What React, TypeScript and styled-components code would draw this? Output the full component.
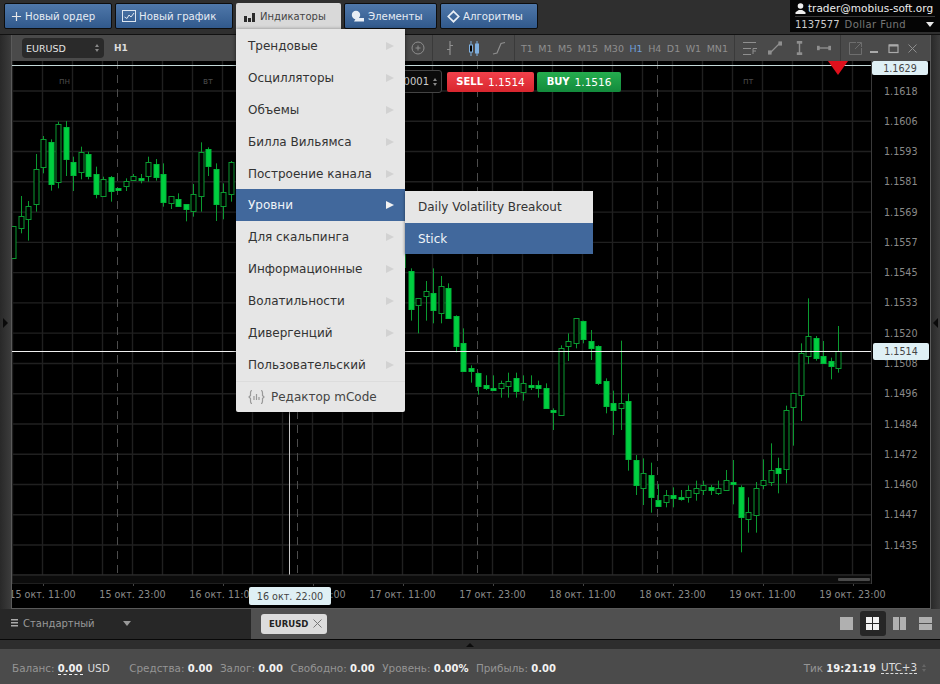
import React from 'react'
import styled, { createGlobalStyle } from 'styled-components'

const GlobalStyle = createGlobalStyle`
  html, body { margin: 0; padding: 0; background: #2f2f2f; }
  body { font-family: "DejaVu Sans", "Liberation Sans", sans-serif; font-size: 11px; }
  * { box-sizing: border-box; }
  svg { flex: none; }
`

const Page = styled.div`
  width: 940px;
  height: 684px;
  display: flex;
  flex-direction: column;
  overflow: hidden;
  background: #2f2f2f;
`

/* top bar */
const TopBar = styled.div`
  height: 35px;
  flex: none;
  display: flex;
  justify-content: space-between;
  background: #2f2f2f;
  border-bottom: 1px solid #111;
`
const Nav = styled.div`
  display: flex;
  gap: 3px;
  padding: 3px 0 0 4px;
`
const NavButton = styled.div<{ $w: number }>`
  position: relative;
  width: ${p => p.$w}px;
  height: 26px;
  display: flex;
  align-items: center;
  gap: 3px;
  padding-left: 6px;
  color: #e6ecf4;
  font-size: 10.2px;
  background: linear-gradient(#4f78aa, #31598c);
  border: 1px solid #0d0d0d;
  border-radius: 2px;
`
const NavOpen = styled(NavButton)`
  height: 26px;
  gap: 5px;
  padding-left: 8px;
  color: #444;
  font-size: 10px;
  background: #d9d9d9;
  border: 0;
  border-radius: 2px 2px 0 0;
  z-index: 5;
`
const Account = styled.div`
  width: 150px;
  height: 32px;
  background: #050505;
  padding: 0 5px;
  font-size: 10.5px;
`
const AccountRow = styled.div`
  height: 16px;
  display: flex;
  align-items: center;
  gap: 2px;
  color: #eee;
  white-space: nowrap;
`
const AccountRowBottom = styled(AccountRow)`
  border-top: 1px solid #3a3a3a;
  gap: 5px;
  color: #ccc;
  font-size: 10px;
`
const FundName = styled.span`
  color: #777;
  flex: 1;
  letter-spacing: 0.4px;
`
const DownMark = styled.span`
  width: 0;
  height: 0;
  border-left: 4px solid transparent;
  border-right: 4px solid transparent;
  border-top: 5px solid #e8e8e8;
  margin-right: 1px;
`

/* indicator menu */
const Menu = styled.div`
  position: absolute;
  top: 26px;
  left: 0;
  width: 169px;
  height: 383px;
  padding-top: 1px;
  background: #e6e6e6;
  box-shadow: 0 1px 4px rgba(0, 0, 0, 0.6);
  border-radius: 0 0 2px 2px;
`
const MenuItem = styled.div<{ $active?: boolean }>`
  position: relative;
  height: 31.9px;
  display: flex;
  align-items: center;
  justify-content: space-between;
  padding: 0 11px 0 12px;
  font-size: 12px;
  color: ${p => (p.$active ? '#f0f4f8' : '#333')};
  background: ${p => (p.$active ? '#41689c' : 'transparent')};
`
const MenuArrow = styled.span<{ $active?: boolean }>`
  width: 0;
  height: 0;
  border-top: 4px solid transparent;
  border-bottom: 4px solid transparent;
  border-left: 8px solid ${p => (p.$active ? '#f2f2f2' : '#d2d2d2')};
`
const MenuEditor = styled.div`
  height: 31px;
  display: flex;
  align-items: center;
  gap: 6px;
  padding-left: 12px;
  font-size: 12px;
  color: #444;
  border-top: 1px solid #dcdcdc;
`
const SubMenu = styled.div`
  position: absolute;
  left: 100%;
  top: 2px;
  width: 188px;
  background: #e6e6e6;
  box-shadow: 0 1px 3px rgba(0, 0, 0, 0.5);
`
const SubItem = styled.div<{ $active?: boolean }>`
  height: 31.5px;
  display: flex;
  align-items: center;
  padding-left: 13px;
  font-size: 12px;
  color: ${p => (p.$active ? '#f0f4f8' : '#333')};
  background: ${p => (p.$active ? '#41689c' : 'transparent')};
`

/* workspace */
const Workspace = styled.div`
  height: 574px;
  flex: none;
  display: flex;
`
const SideStrip = styled.div<{ $w: number }>`
  width: ${p => p.$w}px;
  flex: none;
  display: flex;
  align-items: center;
  justify-content: center;
  padding-top: 2px;
  background: linear-gradient(90deg, #292929, #3c3c3c);
`
const StripArrow = styled.span<{ $left?: boolean }>`
  width: 0;
  height: 0;
  border-top: 5px solid transparent;
  border-bottom: 5px solid transparent;
  ${p => (p.$left ? 'border-right: 5px solid #0a0a0a;' : 'border-left: 5px solid #0a0a0a;')}
`
const ChartWindow = styled.div`
  position: relative;
  flex: 1;
  display: flex;
  flex-direction: column;
  min-width: 0;
  background: #000;
  border-left: 1px solid #5a5a5a;
  border-right: 1px solid #5a5a5a;
  border-bottom: 1px solid #5a5a5a;
`
const Toolbar = styled.div`
  height: 26px;
  flex: none;
  display: flex;
  align-items: center;
  justify-content: space-between;
  background: #4a4a4a;
  color: #8c8c8c;
  font-size: 10px;
`
const ToolLeft = styled.div`
  display: flex;
  align-items: center;
  padding-left: 10px;
  gap: 10px;
`
const SymbolBox = styled.div`
  width: 82px;
  height: 20px;
  display: flex;
  align-items: center;
  justify-content: space-between;
  padding: 0 5px 0 4px;
  color: #e4e4e4;
  font-size: 9.5px;
  background: #2a2a2a;
  border-radius: 4px;
`
const Period = styled.span`
  color: #ddd;
  font-weight: bold;
  font-size: 9px;
`
const Stepper = styled.span`
  display: flex;
  flex-direction: column;
  gap: 2px;
  &::before, &::after {
    content: '';
    width: 0;
    height: 0;
    border-left: 2.5px solid transparent;
    border-right: 2.5px solid transparent;
  }
  &::before { border-bottom: 3px solid #888; }
  &::after { border-top: 3px solid #888; }
`
const FaintStepper = styled(Stepper)`
  &::before { border-bottom-color: #666; }
  &::after { border-top-color: #666; }
`
const ToolRight = styled.div`
  display: flex;
  height: 100%;
`
const ToolSection = styled.div<{ $pad: string }>`
  display: flex;
  align-items: center;
  padding: ${p => p.$pad};
  border-right: 1px solid #3a3a3a;
  &:last-child { border-right: 0; }
`
const IconCell = styled.div<{ $w: number }>`
  width: ${p => p.$w}px;
  display: flex;
  align-items: center;
  justify-content: center;
`
const ToolDot = styled.span`
  width: 2px;
  height: 3px;
  margin-right: 3px;
  background: #777;
`
const Frames = styled.div`
  display: flex;
  gap: 5.5px;
  font-size: 9.5px;
`
const Frame = styled.span<{ $active?: boolean }>`
  color: ${p => (p.$active ? '#6f9fd8' : '#8f8f8f')};
`

const ChartRow = styled.div`
  flex: none;
  height: 523px;
  display: flex;
`
const Plot = styled.div`
  width: 860px;
  flex: none;
`
const PlotSvg = styled.svg`
  display: block;
`
const PriceAxis = styled.div`
  flex: 1;
  padding: 15px 0 0 12px;
  color: #8a8a8a;
  font-size: 9.6px;
`
const PriceRow = styled.div`
  height: 30.27px;
  display: flex;
  align-items: center;
`
const TimeAxis = styled.div`
  flex: 1;
  overflow: hidden;
  display: flex;
  align-items: flex-start;
  color: #8a8a8a;
  font-size: 9.6px;
`
const TimeCell = styled.div<{ $first?: boolean }>`
  position: relative;
  width: 90px;
  flex: none;
  padding-top: 5px;
  text-align: center;
  white-space: nowrap;
  ${p => (p.$first ? 'margin-left: -14.5px;' : '')}
  &::before {
    content: '';
    position: absolute;
    top: 0;
    left: 50%;
    width: 1px;
    height: 2px;
    background: #444;
  }
`
const Tag = styled.div`
  position: absolute;
  display: flex;
  align-items: center;
  justify-content: center;
  color: #444;
  font-size: 9.6px;
  background: #dff0f5;
  border-radius: 2px;
`
const TagTop = styled(Tag)`
  left: 860px;
  top: 26px;
  width: 56px;
  height: 14px;
`
const TagCurrent = styled(Tag)`
  left: 861px;
  top: 308px;
  width: 56px;
  height: 17px;
`
const TagTime = styled(Tag)`
  left: 237px;
  top: 552px;
  width: 82px;
  height: 18px;
`
const TradePanel = styled.div`
  position: absolute;
  left: 380px;
  top: 35px;
  display: flex;
  align-items: center;
  gap: 3px;
`
const LotBox = styled.div`
  width: 50px;
  height: 23px;
  display: flex;
  align-items: center;
  justify-content: flex-end;
  gap: 4px;
  padding-right: 4px;
  margin-right: 2px;
  color: #ccc;
  font-size: 10px;
  background: #0b0b0b;
  border: 1px solid #444;
  border-radius: 3px;
`
const TradeButton = styled.div<{ $buy?: boolean }>`
  height: 20px;
  width: ${p => (p.$buy ? 84 : 87)}px;
  display: flex;
  align-items: center;
  justify-content: center;
  gap: 5px;
  color: #fff;
  font-size: 10.5px;
  border-radius: 2px;
  background: ${p => (p.$buy ? 'linear-gradient(#25ad4e, #138a3c)' : 'linear-gradient(#f2414b, #d8262e)')};
  b { font-size: 10px; }
`

/* bottom */
const TabsBar = styled.div`
  height: 31px;
  flex: none;
  display: flex;
  border-bottom: 1px solid #080808;
`
const LayoutPicker = styled.div`
  width: 251px;
  display: flex;
  align-items: center;
  padding: 0 0 2px 11px;
  color: #999;
  font-size: 10px;
  background: #272727;
`
const LayoutName = styled.span`
  margin: 0 0 0 4px;
  width: 100px;
`
const PickerMark = styled.span`
  width: 0;
  height: 0;
  border-left: 4px solid transparent;
  border-right: 4px solid transparent;
  border-top: 5px solid #999;
`
const TabsArea = styled.div`
  flex: 1;
  display: flex;
  align-items: center;
  justify-content: space-between;
  padding: 0 1.5px 1px 10px;
  background: #505050;
`
const Tab = styled.div`
  width: 66px;
  height: 20px;
  display: flex;
  align-items: center;
  gap: 5px;
  padding-left: 8px;
  color: #222;
  font-size: 8.5px;
  font-weight: bold;
  background: #dcdcdc;
  border-radius: 3px;
`
const Views = styled.div`
  display: flex;
  align-items: center;
`
const ViewButton = styled.div<{ $active?: boolean }>`
  width: 26.3px;
  height: 25px;
  display: flex;
  align-items: center;
  justify-content: center;
  border-radius: 3px;
  background: ${p => (p.$active ? '#262626' : 'transparent')};
`
const Splitter = styled.div`
  height: 9px;
  flex: none;
  display: flex;
  justify-content: center;
  align-items: flex-end;
  padding-bottom: 2px;
  background: #2d2d2d;
`
const SplitMark = styled.span`
  width: 0;
  height: 0;
  border-left: 4px solid transparent;
  border-right: 4px solid transparent;
  border-bottom: 4px solid #0c0c0c;
`
const StatusBar = styled.div`
  flex: 1;
  display: flex;
  align-items: center;
  justify-content: space-between;
  padding: 2px 14px 0 12px;
  background: #4b4b4b;
  color: #959595;
  font-size: 10.4px;
`
const StatusGroup = styled.div`
  display: flex;
  align-items: center;
  gap: 7.5px;
`
const StatusRight = styled(StatusGroup)`
  gap: 5px;
`
const Stat = styled.span<{ $gap?: number }>`
  white-space: nowrap;
  margin-right: ${p => p.$gap || 0}px;
  b { color: #f2f2f2; font-size: 10px; }
`
const Dashed = styled.b`
  border-bottom: 1px dashed #f2f2f2;
`
const Unit = styled.span`
  color: #ddd;
  margin-left: 5px;
`
const Zone = styled.span`
  color: #ddd;
  border-bottom: 1px dashed #ddd;
`

/* candles, y and x read off the picture at 3x */
type Row = [number, number, number, number, number]
const segments: { start: number; oy: number; rows: Row[] }[] = [
  {
    start: 13,
    oy: 60,
    rows: [
      [498, 594, 498, 594, 0], [408, 520, 468, 505, 0], [423, 542, 438, 477, 0], [282, 455, 328, 432, 0],
      [228, 340, 237, 320, 0], [238, 392, 245, 372, 1], [185, 385, 192, 365, 0], [183, 348, 200, 297, 1],
      [290, 393, 305, 343, 1], [260, 358, 275, 335, 0], [275, 358, 282, 348, 1], [320, 415, 343, 402, 1],
      [350, 410, 357, 408, 0], [348, 425, 350, 393, 1], [385, 392, 385, 391, 1], [355, 393, 364, 380, 0],
      [342, 362, 347, 358, 0], [342, 370, 355, 360, 1], [290, 365, 305, 348, 0], [297, 362, 312, 350, 1],
      [310, 440, 342, 425, 1], [408, 447, 409, 430, 0], [400, 440, 417, 438, 1], [432, 484, 432, 447, 1],
      [372, 470, 401, 453, 0], [247, 455, 275, 407, 0], [262, 348, 267, 318, 1], [310, 483, 327, 432, 1],
      [370, 478, 395, 437, 0], [303, 425, 305, 400, 0],
    ],
  },
  {
    start: 410.5,
    oy: 250,
    rows: [
      [55, 212, 62, 175, 1], [145, 250, 145, 166, 0], [93, 212, 123, 138, 0], [55, 220, 130, 182, 1],
      [78, 220, 108, 190, 0], [100, 205, 115, 205, 1], [196, 307, 197, 286, 1], [235, 363, 280, 363, 1],
      [346, 398, 353, 362, 1], [368, 434, 369, 407, 1], [376, 420, 405, 415, 1], [376, 422, 414, 421, 1],
      [392, 443, 400, 415, 0], [368, 443, 392, 407, 0], [368, 443, 384, 423, 1], [376, 452, 400, 428, 0],
      [376, 420, 405, 412, 1], [392, 443, 406, 414, 1], [400, 475, 414, 475, 1], [475, 540, 481, 488, 1],
      [286, 496, 295, 496, 0], [250, 333, 272, 288, 0], [205, 295, 205, 279, 0], [212, 280, 212, 265, 1],
      [240, 330, 272, 294, 1], [286, 405, 287, 398, 1],
    ],
  },
  {
    start: 605.5,
    oy: 290,
    rows: [
      [265, 370, 272, 346, 1], [302, 435, 338, 360, 1], [152, 420, 338, 354, 0], [310, 542, 332, 505, 1],
      [495, 615, 510, 585, 1], [505, 645, 548, 592, 0], [518, 668, 555, 622, 1], [582, 650, 630, 647, 1],
      [600, 652, 615, 636, 0], [592, 652, 614, 622, 1], [600, 632, 622, 629, 1], [586, 638, 600, 621, 0],
      [572, 632, 594, 608, 0], [572, 615, 586, 601, 0], [585, 615, 592, 600, 1], [572, 615, 593, 608, 0],
      [540, 602, 571, 600, 0], [510, 643, 577, 584, 1], [586, 787, 592, 682, 1], [622, 728, 667, 688, 0],
      [576, 728, 593, 675, 0], [508, 598, 571, 585, 0], [460, 588, 541, 578, 0], [503, 610, 533, 548, 1],
      [347, 580, 361, 539, 0], [308, 467, 309, 352, 0], [160, 393, 190, 316, 0], [25, 222, 138, 198, 0],
      [138, 212, 145, 205, 1], [153, 220, 197, 218, 1], [203, 268, 212, 227, 1], [108, 248, 182, 234, 0],
    ],
  },
]

const PlotChart = () => {
  const vertical = Array.from({ length: 29 }, (_, i) => 12.5 + 30 * i)
  const horizontal = Array.from({ length: 17 }, (_, i) => 91 + 30.27 * i)
  return (
    <PlotSvg width={860} height={523} viewBox="12 61 860 523">
      {vertical.map(x => (
        <line key={x} x1={x} x2={x} y1={61} y2={575} stroke="#202020" strokeWidth={1.4} />
      ))}
      {horizontal.map(y => (
        <line key={y} x1={12} x2={875} y1={y} y2={y} stroke="#202020" strokeWidth={1.4} />
      ))}
      {[117.5, 297.5, 477.5, 657.5].map(x => (
        <line key={x} x1={x} x2={x} y1={61} y2={575} stroke="#4c4c4c" strokeDasharray="8 6" />
      ))}
      <text x={59} y={84} fill="#4a4a4a" fontSize={8.5} fontFamily="DejaVu Sans">пн</text>
      <text x={203} y={84} fill="#4a4a4a" fontSize={8.5} fontFamily="DejaVu Sans">вт</text>
      <text x={743} y={84} fill="#4a4a4a" fontSize={8.5} fontFamily="DejaVu Sans">пт</text>
      <line x1={405.5} x2={405.5} y1={250} y2={268} stroke="#0a9a30" />
      {segments.map(seg =>
        seg.rows.map(([wt, wb, bt, bb, filled], i) => {
          const x = Math.round(seg.start + i * 7.5) + 0.5
          const y = (v: number) => seg.oy + v / 3
          const top = Math.round(y(bt)) + 0.5
          const h = Math.max(1, Math.round(y(bb) - y(bt)))
          return (
            <g key={`${seg.start}-${i}`}>
              <line x1={x} x2={x} y1={y(wt)} y2={y(wb)} stroke="#0a9a30" />
              <rect
                x={x - 2.5}
                y={top}
                width={5}
                height={h}
                fill={filled ? '#00cf40' : '#000'}
                stroke={filled ? '#00b838' : '#0a9a30'}
              />
            </g>
          )
        }),
      )}
      <line x1={12} x2={872} y1={65.5} y2={65.5} stroke="#c4d8d8" />
      <line x1={12} x2={872} y1={351.5} y2={351.5} stroke="#f0f0f0" />
      <line x1={289.5} x2={289.5} y1={61} y2={584} stroke="#c8c8c8" />
      <polygon points="828,61 848,61 838,75" fill="#e0101c" />
      <rect x={12} y={575} width={860} height={9} fill="#0c0c0c" stroke="#333" />
      <rect x={838} y={578} width={32} height={3} rx={1} fill="#4a4a4a" />
      <line x1={871.5} x2={871.5} y1={61} y2={584} stroke="#3a3a3a" />
    </PlotSvg>
  )
}

const PlusIcon = () => (
  <svg width={11} height={11} viewBox="0 0 12 12" fill="none" stroke="#e8e8e8" strokeWidth={1.3}>
    <path d="M6 1v10M1 6h10" />
  </svg>
)
const ChartIcon = () => (
  <svg width={14} height={14} viewBox="0 0 14 14" fill="none" stroke="#dde6f0">
    <rect x={0.5} y={1.5} width={13} height={11} />
    <path d="M2.5 8 5 9.5 7 6l2 2 3-4" />
  </svg>
)
const BarsIcon = () => (
  <svg width={11} height={11} viewBox="0 0 11 11" fill="#2b2b2b">
    <rect x={0} y={5} width={3} height={6} />
    <rect x={4} y={7} width={3} height={4} />
    <rect x={8} y={2} width={3} height={9} />
  </svg>
)
const ShapesIcon = () => (
  <svg width={14} height={12} viewBox="0 0 14 12" fill="#e8eef5">
    <circle cx={5} cy={5} r={4.2} />
    <path d="M5 8h8v3.5H3z" />
  </svg>
)
const DiamondIcon = () => (
  <svg width={13} height={13} viewBox="0 0 13 13" fill="none" stroke="#e8eef5" strokeWidth={1.7}>
    <path d="M6.5 1.3 11.7 6.5 6.5 11.7 1.3 6.5z" />
  </svg>
)
const UserIcon = () => (
  <svg width={11} height={11} viewBox="0 0 11 11" fill="#eee">
    <circle cx={5.5} cy={3} r={2.8} />
    <path d="M0.5 11V9.2L3.8 7h3.4l3.3 2.2V11z" />
  </svg>
)
const BraceIcon = () => (
  <svg width={17} height={16} viewBox="0 0 17 16" fill="none" stroke="#999" strokeWidth={1.2}>
    <path d="M4 1.5C2.5 1.5 2.5 2.5 2.5 4v2.5L1 8l1.5 1.5V12c0 1.5 0 2.5 1.500 2.500" />
    <path d="M13 1.500c1.500 0 1.500 1 1.500 2.500v2.500L16 8l-1.500 1.500V12c0 1.500 0 2.500-1.500 2.500" />
    <path d="M6 7v4M8.500 5v6M11 8v3" />
  </svg>
)
const tool = '#8f8f8f'
const CirclePlus = () => (
  <svg width={14} height={14} viewBox="0 0 14 14" fill="none" stroke={tool}>
    <circle cx={7} cy={7} r={6} />
    <path d="M4.500 7h5M7 4.500v5" />
  </svg>
)
const BarTool = () => (
  <svg width={10} height={14} viewBox="0 0 10 14" fill="none" stroke={tool} strokeWidth={1.200}>
    <path d="M5 0v14M2 8.500h3M5 4.500h3" />
  </svg>
)
const CandleTool = () => (
  <svg width={12} height={15} viewBox="0 0 12 15" fill="none" stroke="#7fb0e0">
    <path d="M3 0v15M9 0v15" />
    <rect x={1.500} y={4} width={3} height={7} fill="#000" />
    <rect x={7.500} y={3} width={3} height={9} fill="#7fb0e0" />
  </svg>
)
const LineTool = () => (
  <svg width={14} height={14} viewBox="0 0 14 14" fill="none" stroke={tool} strokeWidth={1.200}>
    <path d="M1 13 5 12 9 2.500 13 1.500" />
  </svg>
)
const FiboTool = () => (
  <svg width={14} height={13} viewBox="0 0 14 13" fill="none" stroke={tool}>
    <path d="M0 .5h13M0 6.500h8M0 12.500h8M10 12V6.500h4M10 9h3" />
  </svg>
)
const TrendTool = () => (
  <svg width={14} height={14} viewBox="0 0 14 14" fill={tool} stroke={tool} strokeWidth={1.200}>
    <path d="M2 12 12 2" />
    <rect x={0} y={10} width={3} height={3} />
    <rect x={11} y={1} width={3} height={3} />
  </svg>
)
const VLineTool = () => (
  <svg width={7} height={14} viewBox="0 0 7 14" fill={tool} stroke={tool} strokeWidth={1.400}>
    <path d="M3.500 1v12" />
    <rect x={1.500} y={0.500} width={4} height={1.500} />
    <rect x={1.500} y={12} width={4} height={1.500} />
  </svg>
)
const HLineTool = () => (
  <svg width={14} height={6} viewBox="0 0 14 6" fill={tool} stroke={tool} strokeWidth={1.400}>
    <path d="M1 3h12" />
    <rect x={0.500} y={1.500} width={1.500} height={3} />
    <rect x={12} y={1.500} width={1.500} height={3} />
  </svg>
)
const PopTool = () => (
  <svg width={13} height={13} viewBox="0 0 13 13" fill="none" stroke="#6e6e6e">
    <path d="M7 .5H.5v12h12V6M6 7l6-6M8 .5h4.500V5" />
  </svg>
)
const MinTool = () => (
  <svg width={11} height={11} viewBox="0 0 11 11" fill="#aaa">
    <rect x={1} y={8} width={8} height={2} />
  </svg>
)
const MaxTool = () => (
  <svg width={11} height={11} viewBox="0 0 11 11" fill="none" stroke="#aaa">
    <rect x={1} y={2} width={9} height={7.500} strokeWidth={1.200} />
    <path d="M1 2.500h9" strokeWidth={2} />
  </svg>
)
const CloseTool = ({ color = '#8f8f8f', size = 9 }: { color?: string; size?: number }) => (
  <svg width={size} height={size} viewBox="0 0 9 9" fill="none" stroke={color}>
    <path d="M.5.500l8 8M8.500.500l-8 8" />
  </svg>
)
const MenuLines = () => (
  <svg width={8} height={9} viewBox="0 0 8 9" fill="#aaa">
    <rect y={0} width={7} height={1.500} />
    <rect y={3} width={7} height={1.500} />
    <rect y={6} width={7} height={1.500} />
  </svg>
)
const SingleView = () => (
  <svg width={13} height={13} viewBox="0 0 13 13" fill="#b0b0b0">
    <rect width={13} height={13} />
  </svg>
)
const QuadView = () => (
  <svg width={13} height={13} viewBox="0 0 13 13" fill="#f2f2f2">
    <rect width={6} height={6} />
    <rect x={7} width={6} height={6} />
    <rect y={7} width={6} height={6} />
    <rect x={7} y={7} width={6} height={6} />
  </svg>
)
const ColumnsView = () => (
  <svg width={13} height={13} viewBox="0 0 13 13" fill="#b0b0b0">
    <rect width={6} height={13} />
    <rect x={7} width={6} height={13} />
  </svg>
)
const RowsView = () => (
  <svg width={13} height={13} viewBox="0 0 13 13" fill="#b0b0b0">
    <rect width={13} height={6} />
    <rect y={7} width={13} height={6} />
  </svg>
)

const menuItems = [
  'Трендовые',
  'Осцилляторы',
  'Объемы',
  'Билла Вильямса',
  'Построение канала',
  'Уровни',
  'Для скальпинга',
  'Информационные',
  'Волатильности',
  'Дивергенций',
  'Пользовательский',
]
const frames = ['T1', 'M1', 'M5', 'M15', 'M30', 'H1', 'H4', 'D1', 'W1', 'MN1']
const prices = [
  '1.1618', '1.1606', '1.1593', '1.1581', '1.1569', '1.1557', '1.1545', '1.1533',
  '1.1520', '1.1508', '1.1496', '1.1484', '1.1472', '1.1460', '1.1447', '1.1435',
]
const times = [
  '15 окт. 11:00', '15 окт. 23:00', '16 окт. 11:00', '16 окт. 23:00', '17 окт. 11:00',
  '17 окт. 23:00', '18 окт. 11:00', '18 окт. 23:00', '19 окт. 11:00', '19 окт. 23:00',
]

const App = () => (
  <Page>
    <GlobalStyle />
    <TopBar>
      <Nav>
        <NavButton $w={108}><PlusIcon />Новый ордер</NavButton>
        <NavButton $w={118}><ChartIcon />Новый график</NavButton>
        <NavOpen $w={105}>
          <BarsIcon />Индикаторы
          <Menu>
            {menuItems.map(name => (
              <MenuItem key={name} $active={name === 'Уровни'}>
                {name}
                <MenuArrow $active={name === 'Уровни'} />
                {name === 'Уровни' && (
                  <SubMenu>
                    <SubItem>Daily Volatility Breakout</SubItem>
                    <SubItem $active>Stick</SubItem>
                  </SubMenu>
                )}
              </MenuItem>
            ))}
            <MenuEditor><BraceIcon />Редактор mCode</MenuEditor>
          </Menu>
        </NavOpen>
        <NavButton $w={93}><ShapesIcon />Элементы</NavButton>
        <NavButton $w={98}><DiamondIcon />Алгоритмы</NavButton>
      </Nav>
      <Account>
        <AccountRow><UserIcon />trader@mobius-soft.org</AccountRow>
        <AccountRowBottom>1137577 <FundName>Dollar Fund</FundName><DownMark /></AccountRowBottom>
      </Account>
    </TopBar>

    <Workspace>
      <SideStrip $w={11}><StripArrow /></SideStrip>
      <ChartWindow>
        <Toolbar>
          <ToolLeft>
            <SymbolBox>EURUSD<Stepper /></SymbolBox>
            <Period>H1</Period>
          </ToolLeft>
          <ToolRight>
            <ToolSection $pad="0 5px 0 0">
              <ToolDot />
              <IconCell $w={19}><CirclePlus /></IconCell>
            </ToolSection>
            <ToolSection $pad="0 3px 0 4px">
              <IconCell $w={24.5}><BarTool /></IconCell>
              <IconCell $w={24.5}><CandleTool /></IconCell>
              <IconCell $w={24.5}><LineTool /></IconCell>
            </ToolSection>
            <ToolSection $pad="0 6px 0 6px">
              <Frames>
                {frames.map(f => <Frame key={f} $active={f === 'H1'}>{f}</Frame>)}
              </Frames>
            </ToolSection>
            <ToolSection $pad="0 4px 0 3px">
              <IconCell $w={24.5}><FiboTool /></IconCell>
              <IconCell $w={24.5}><TrendTool /></IconCell>
              <IconCell $w={24.5}><VLineTool /></IconCell>
              <IconCell $w={24.5}><HLineTool /></IconCell>
            </ToolSection>
            <ToolSection $pad="0 8px 0 5px">
              <IconCell $w={19}><PopTool /></IconCell>
              <IconCell $w={19}><MinTool /></IconCell>
              <IconCell $w={19}><MaxTool /></IconCell>
              <IconCell $w={19}><CloseTool /></IconCell>
            </ToolSection>
          </ToolRight>
        </Toolbar>
        <ChartRow>
          <Plot><PlotChart /></Plot>
          <PriceAxis>
            {prices.map(p => <PriceRow key={p}>{p}</PriceRow>)}
          </PriceAxis>
        </ChartRow>
        <TimeAxis>
          {times.map((t, i) => <TimeCell key={t} $first={i === 0}>{t}</TimeCell>)}
        </TimeAxis>
        <TradePanel>
          <LotBox>0001<Stepper /></LotBox>
          <TradeButton><b>SELL</b> 1.1514</TradeButton>
          <TradeButton $buy><b>BUY</b> 1.1516</TradeButton>
        </TradePanel>
        <TagTop>1.1629</TagTop>
        <TagCurrent>1.1514</TagCurrent>
        <TagTime>16 окт. 22:00</TagTime>
      </ChartWindow>
      <SideStrip $w={9}><StripArrow $left /></SideStrip>
    </Workspace>

    <TabsBar>
      <LayoutPicker>
        <MenuLines />
        <LayoutName>Стандартный</LayoutName>
        <PickerMark />
      </LayoutPicker>
      <TabsArea>
        <Tab>EURUSD <CloseTool color="#777" /></Tab>
        <Views>
          <ViewButton><SingleView /></ViewButton>
          <ViewButton $active><QuadView /></ViewButton>
          <ViewButton><ColumnsView /></ViewButton>
          <ViewButton><RowsView /></ViewButton>
        </Views>
      </TabsArea>
    </TabsBar>
    <Splitter><SplitMark /></Splitter>
    <StatusBar>
      <StatusGroup>
        <Stat $gap={12}>Баланс: <Dashed>0.00</Dashed><Unit>USD</Unit></Stat>
        <Stat>Средства: <b>0.00</b></Stat>
        <Stat>Залог: <b>0.00</b></Stat>
        <Stat>Свободно: <b>0.00</b></Stat>
        <Stat>Уровень: <b>0.00%</b></Stat>
        <Stat>Прибыль: <b>0.00</b></Stat>
      </StatusGroup>
      <StatusRight>
        <Stat>Тик <b>19:21:19</b></Stat>
        <Zone>UTC+3</Zone>
        <FaintStepper />
      </StatusRight>
    </StatusBar>
  </Page>
)

export default App
